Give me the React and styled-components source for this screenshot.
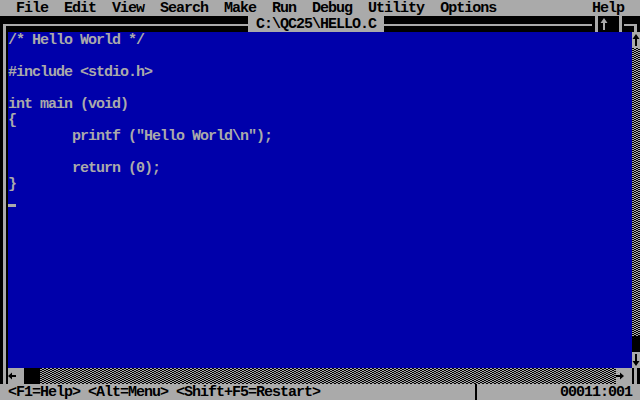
import styled, { createGlobalStyle } from "styled-components";

const GRAY = "#aaaaaa";
const BLUE = "#0000aa";

const GlobalStyle = createGlobalStyle`
  html, body {
    margin: 0;
    padding: 0;
    background: #000;
  }
`;

const Screen = styled.div`
  width: 640px;
  height: 400px;
  display: flex;
  flex-direction: column;
  overflow: hidden;
  background: #000;
  font-family: "Liberation Mono", "DejaVu Sans Mono", monospace;
  font-size: 15px;
  font-weight: bold;
  letter-spacing: -1px;
  line-height: 18px;
  white-space: pre;
`;

const MenuBar = styled.div`
  flex: 0 0 16px;
  height: 16px;
  display: flex;
  justify-content: space-between;
  padding: 0 16px;
  background: ${GRAY};
  color: #000;
  overflow: hidden;
`;

const MenuList = styled.div`
  display: flex;
  gap: 16px;
`;

const TitleBar = styled.div`
  flex: 0 0 16px;
  height: 16px;
  display: flex;
  background: #000;
  overflow: hidden;
`;

const HLine = styled.div`
  flex: ${(p) => (p.$w ? `0 0 ${p.$w}px` : "1")};
  background: linear-gradient(${GRAY}, ${GRAY}) 0 8px / 100% 2px no-repeat;
`;

const Corner = styled.div`
  flex: 0 0 8px;
  background:
    linear-gradient(${GRAY}, ${GRAY}) ${(p) => (p.$right ? "0 8px / 5px 2px" : "3px 8px / 5px 2px")} no-repeat,
    linear-gradient(${GRAY}, ${GRAY}) ${(p) => (p.$right ? "2px 8px" : "3px 8px")} / 3px 8px no-repeat;
`;

const Title = styled.div`
  padding: 0 8px;
  background: ${GRAY};
  color: #000;
`;

const VBorder = styled.div`
  flex: 0 0 8px;
  background: linear-gradient(${GRAY}, ${GRAY}) ${(p) => p.$x ?? 3}px 0 / 3px 100% no-repeat #000;
`;

const Cell = styled.div`
  flex: 0 0 ${(p) => p.$h ?? 16}px;
  width: 8px;
  display: flex;
  background: ${(p) => p.$bg};
`;

const Editor = styled.div`
  flex: 0 0 336px;
  display: flex;
`;

const Code = styled.div`
  flex: 1;
  background: ${BLUE};
  color: ${GRAY};
`;

const Line = styled.div`
  height: 16px;
`;

const Cursor = styled.span`
  display: inline-block;
  width: 8px;
  height: 16px;
  vertical-align: top;
  background: linear-gradient(${GRAY}, ${GRAY}) 0 12px / 8px 3px no-repeat;
`;

const VScroll = styled.div`
  flex: 0 0 8px;
  display: flex;
  flex-direction: column;
`;

const Track = styled.div`
  flex: 1;
  background: conic-gradient(${GRAY} 0 25%, #000 0 50%, ${GRAY} 0 75%, #000 0) 0 0 / 4px 2px;
`;

const HScroll = styled.div`
  flex: 0 0 16px;
  display: flex;
`;

const StatusBar = styled.div`
  flex: 0 0 16px;
  height: 16px;
  display: flex;
  padding: 0 8px;
  background: ${GRAY};
  color: #000;
  overflow: hidden;
`;

const Hints = styled.div`
  flex: 0 0 464px;
`;

const Separator = styled.div`
  flex: 0 0 8px;
  background: linear-gradient(#000, #000) 3px 0 / 2px 100% no-repeat;
`;

const Position = styled.div`
  margin-left: auto;
`;

const ARROWS = {
  up: "M4 2 L7.5 7 H5 V14 H3 V7 H0.5 Z",
  down: "M4 14 L7.5 9 H5 V2 H3 V9 H0.5 Z",
  left: "M0 8 L4 4.5 V7 H8 V9 H4 V11.5 Z",
  right: "M8 8 L4 4.5 V7 H0 V9 H4 V11.5 Z",
};

function Arrow({ dir, color }) {
  return (
    <svg width="8" height="16" viewBox="0 0 8 16">
      <path d={ARROWS[dir]} fill={color} />
    </svg>
  );
}

const menus = ["File", "Edit", "View", "Search", "Make", "Run", "Debug", "Utility", "Options"];

const source = [
  "/* Hello World */",
  "",
  "#include <stdio.h>",
  "",
  "int main (void)",
  "{",
  '        printf ("Hello World\\n");',
  "",
  "        return (0);",
  "}",
];

export default function App() {
  return (
    <>
      <GlobalStyle />
      <Screen>
        <MenuBar>
          <MenuList>
            {menus.map((m) => (
              <span key={m}>{m}</span>
            ))}
          </MenuList>
          <span>Help</span>
        </MenuBar>

        <TitleBar>
          <Corner />
          <HLine $w={240} />
          <Title>C:\QC25\HELLO.C</Title>
          <HLine />
          <VBorder />
          <Cell $bg="#000">
            <Arrow dir="up" color={GRAY} />
          </Cell>
          <VBorder />
          <HLine $w={8} />
          <Corner $right />
        </TitleBar>

        <Editor>
          <VBorder />
          <Code>
            {source.map((line, i) => (
              <Line key={i}>{line}</Line>
            ))}
            <Line>
              <Cursor />
            </Line>
          </Code>
          <VScroll>
            <Cell $bg={GRAY}>
              <Arrow dir="up" color="#000" />
            </Cell>
            <Track />
            <Cell $bg="#000" />
            <Cell $bg={GRAY}>
              <Arrow dir="down" color="#000" />
            </Cell>
          </VScroll>
        </Editor>

        <HScroll>
          <VBorder />
          <Cell $bg={GRAY}>
            <Arrow dir="left" color="#000" />
          </Cell>
          <Cell $bg="#000" />
          <Track />
          <Cell $bg={GRAY}>
            <Arrow dir="right" color="#000" />
          </Cell>
          <VBorder $x={2} />
        </HScroll>

        <StatusBar>
          <Hints>{"<F1=Help> <Alt=Menu> <Shift+F5=Restart>"}</Hints>
          <Separator />
          <Position>00011:001</Position>
        </StatusBar>
      </Screen>
    </>
  );
}
